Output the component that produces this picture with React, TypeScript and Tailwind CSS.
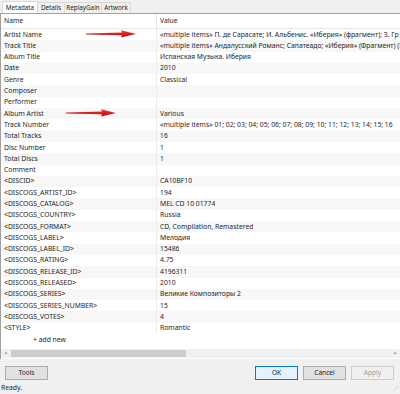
import React from "react";

const rows: [string, string][] = [
  ["Artist Name", "«multiple items» П. де Сарасате; И. Альбенис. «Иберия» (фрагмент); З. Гр"],
  ["Track Title", "«multiple items» Андалусский Романс; Сапатеадо; «Иберия» (Фрагмент) (I"],
  ["Album Title", "Испанская Музыка. Иберия"],
  ["Date", "2010"],
  ["Genre", "Classical"],
  ["Composer", ""],
  ["Performer", ""],
  ["Album Artist", "Various"],
  ["Track Number", "«multiple items» 01; 02; 03; 04; 05; 06; 07; 08; 09; 10; 11; 12; 13; 14; 15; 16"],
  ["Total Tracks", "16"],
  ["Disc Number", "1"],
  ["Total Discs", "1"],
  ["Comment", ""],
  ["<DISCID>", "CA10BF10"],
  ["<DISCOGS_ARTIST_ID>", "194"],
  ["<DISCOGS_CATALOG>", "MEL CD 10 01774"],
  ["<DISCOGS_COUNTRY>", "Russia"],
  ["<DISCOGS_FORMAT>", "CD, Compilation, Remastered"],
  ["<DISCOGS_LABEL>", "Мелодия"],
  ["<DISCOGS_LABEL_ID>", "15486"],
  ["<DISCOGS_RATING>", "4.75"],
  ["<DISCOGS_RELEASE_ID>", "4196311"],
  ["<DISCOGS_RELEASED>", "2010"],
  ["<DISCOGS_SERIES>", "Великие Композиторы 2"],
  ["<DISCOGS_SERIES_NUMBER>", "15"],
  ["<DISCOGS_VOTES>", "4"],
  ["<STYLE>", "Romantic"],
];

function Arrow() {
  return (
    <svg width="50" height="8" viewBox="0 0 50 8">
      <defs>
        <linearGradient id="ag" x1="0" y1="0" x2="0" y2="1">
          <stop offset="0" stopColor="#f04040" />
          <stop offset="1" stopColor="#c00000" />
        </linearGradient>
      </defs>
      <path d="M0 3.6 L36 2.6 L35 0.2 L50 4 L35 7.6 L36 5.2 L0 4.4 Z" fill="url(#ag)" />
    </svg>
  );
}

function Btn({ label, cls }: { label: string; cls?: string }) {
  return (
    <div
      className={
        "w-[43px] h-[14px] flex items-center justify-center border text-[6.6px] " +
        (cls ?? "border-[#adadad] bg-[#e1e1e1] text-[#222]")
      }
    >
      {label}
    </div>
  );
}

export default function App() {
  return (
    <div
      className="relative w-[400px] h-[394px] overflow-hidden bg-[#f0f0f0] flex flex-col text-[#1e1e1e]"
      style={{ fontFamily: '"Noto Sans", "Open Sans", sans-serif' }}
    >
      {/* tabs */}
      <div className="h-[13px] flex items-end pl-[2px] text-[6.3px] shrink-0">
        <div className="h-[12px] shrink-0 flex items-center bg-white border border-b-0 border-[#d9d9d9] w-[36px] justify-center">Metadata</div>
        <div className="h-[11px] shrink-0 flex items-center border border-l-0 border-b-0 border-[#d9d9d9] w-[27px] justify-center">Details</div>
        <div className="h-[11px] shrink-0 flex items-center border border-l-0 border-b-0 border-[#d9d9d9] w-[37px] justify-center">ReplayGain</div>
        <div className="h-[11px] shrink-0 flex items-center border border-l-0 border-b-0 border-[#d9d9d9] w-[29px] justify-center">Artwork</div>
      </div>
      {/* panel */}
      <div className="h-[346px] shrink-0 bg-white border-l border-t border-[#a0a0a0] flex flex-col text-[6.8px]">
        <div className="h-[15px] flex items-center border-b border-[#e5e5e5] shrink-0">
          <div className="w-[156px] shrink-0 pl-[3px] border-r border-[#e5e5e5] h-full flex items-center">Name</div>
          <div className="pl-[3px]">Value</div>
        </div>
        {rows.map(([n, v], i) => (
          <div
            key={n}
            className={"h-[11.31px] flex items-center shrink-0 " + (i % 2 === 1 ? "bg-[#f7f7f7]" : "bg-white")}
          >
            <div className="w-[156px] shrink-0 pl-[3px] border-r border-[#ececec] h-full flex items-center whitespace-nowrap">{n}</div>
            <div className="pl-[3px] min-w-0 overflow-hidden whitespace-nowrap">{v}</div>
          </div>
        ))}
        <div className="h-[11.31px] flex items-center shrink-0 mt-[0.6px]">
          <div className="pl-[32px]">+ add new</div>
        </div>
        <div className="flex-1" />
        <div className="h-[9px] bg-[#f0f0f0] flex items-center shrink-0 mb-[1px]">
          <div className="w-[10px] text-center text-[6px]">&lt;</div>
          <div className="w-[175px] h-[7px] bg-[#cdcdcd]" />
          <div className="flex-1" />
          <div className="w-[10px] text-center text-[6px]">&gt;</div>
        </div>
      </div>
      {/* buttons */}
      <div className="h-[23px] shrink-0 flex items-center px-[5px] pt-[4px]">
        <Btn label="Tools" />
        <div className="flex-1" />
        <div className="flex gap-[5px] pr-[1px]">
          <Btn label="OK" cls="border-[#0078d7] bg-[#e5f1fb] text-[#222]" />
          <Btn label="Cancel" />
          <Btn label="Apply" cls="border-[#cccccc] bg-[#f0f0f0] text-[#a0a0a0]" />
        </div>
      </div>
      {/* status */}
      <div className="flex-1 flex items-center pl-[1px] text-[6.8px]">Ready.</div>
      <div className="absolute right-[1px] bottom-[1px] text-[6px] text-[#999]">⋰</div>
      {/* arrows */}
      <div className="absolute left-[86px] top-[30px]"><Arrow /></div>
      <div className="absolute left-[66px] top-[109px]"><Arrow /></div>
    </div>
  );
}
